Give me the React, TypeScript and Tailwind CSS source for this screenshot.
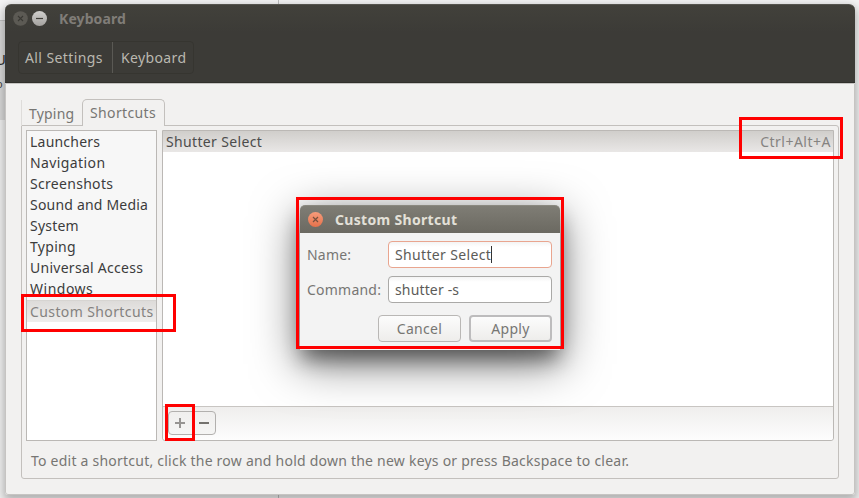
import type { ReactNode } from "react";

const categories = [
  { name: "Launchers", tracking: "tracking-[0.22px]" },
  { name: "Navigation", tracking: "tracking-[0.4px]" },
  { name: "Screenshots", tracking: "tracking-[0.3px]" },
  { name: "Sound and Media", tracking: "tracking-[0.2px]" },
  { name: "System", tracking: "tracking-[0.2px]" },
  { name: "Typing", tracking: "tracking-[0.3px]" },
  { name: "Universal Access", tracking: "tracking-[0.27px]" },
  { name: "Windows", tracking: "tracking-[0.5px]" },
];

function Highlight({ className }: { className: string }) {
  return <div className={`pointer-events-none absolute z-20 border-[3px] border-[#ff0000] ${className}`} />;
}

function Field({ label, children, focused }: { label: string; children: ReactNode; focused?: boolean }) {
  return (
    <div className="flex h-[27px] items-center">
      <span className="w-[81px] tracking-[0.22px] text-[#777673]">{label}</span>
      <div
        className={`flex h-[27px] w-[164px] items-center rounded-[4px] border bg-linear-to-b from-[#f4f4f4] via-white via-20% to-white pl-[6px] text-[#5c5b58] ${
          focused ? "border-[#e9a58f]" : "border-[#aaa9a7]"
        }`}
      >
        {children}
      </div>
    </div>
  );
}

function ShortcutDialog() {
  return (
    <div className="absolute left-[300px] top-[205px] z-10 h-[145px] w-[260px] rounded-t-[5px] bg-[#f3f3f3] shadow-[0_11px_20px_-2px_rgba(0,0,0,0.45),0_12px_46px_2px_rgba(0,0,0,0.5)]">
      <div className="flex h-[28px] items-center rounded-t-[5px] border-t border-[#8b8980] bg-linear-to-b from-[#7f7d75] to-[#6b6961] pl-[8px]">
        <svg width="15" height="15" viewBox="0 0 15 15">
          <defs>
            <linearGradient id="close" x1="0" y1="0" x2="0" y2="1">
              <stop offset="0" stopColor="#f79c7b" />
              <stop offset="1" stopColor="#e4714b" />
            </linearGradient>
          </defs>
          <circle cx="7.5" cy="7.5" r="7.5" fill="url(#close)" />
          <path d="M5 5l5 5M10 5l-5 5" stroke="#75503e" strokeWidth="1.2" />
        </svg>
        <span className="ml-[12px] text-[14px] font-bold tracking-[0.32px] text-[#e3e0d8]">Custom Shortcut</span>
      </div>
      <div className="flex flex-col gap-[8px] pl-[7px] pt-[8px]">
        <Field label="Name:" focused>
          <span className="tracking-[0.35px]">Shutter Select</span>
          <span className="h-[17px] w-px bg-[#333]" />
        </Field>
        <Field label="Command:">
          <span className="tracking-[0.15px]">shutter -s</span>
        </Field>
      </div>
      <div className="mr-[8px] mt-[12px] flex justify-end gap-[8px] tracking-[0.3px] text-[#777673]">
        <div className="flex h-[27px] w-[83px] items-center justify-center rounded-[4px] border border-[#b9b7b5] bg-linear-to-b from-[#fcfcfc] to-[#eeedeb]">
          Cancel
        </div>
        <div className="flex h-[27px] w-[83px] items-center justify-center rounded-[4px] border-2 border-[#bdbcbd] bg-linear-to-b from-[#fcfcfc] to-[#eeedeb]">
          Apply
        </div>
      </div>
    </div>
  );
}

function TitleBar() {
  return (
    <header className="h-[79px] shrink-0 rounded-t-[6px] border-b border-t border-b-[#31302c] border-t-[#55544e] bg-linear-to-b from-[#42413b] via-[#3c3b37] via-35% to-[#3c3b37]">
      <div className="flex h-[27px] items-center pl-[8px]">
        <svg width="34" height="15" viewBox="0 0 34 15">
          <defs>
            <linearGradient id="minimize" x1="0" y1="0" x2="0" y2="1">
              <stop offset="0" stopColor="#d1d0ce" />
              <stop offset="1" stopColor="#a3a19e" />
            </linearGradient>
          </defs>
          <circle cx="7.5" cy="7.5" r="7.3" fill="#5c5a54" />
          <path d="M5 5l5 5M10 5l-5 5" stroke="#3a3934" strokeWidth="1.1" />
          <circle cx="26.5" cy="7.5" r="7.5" fill="url(#minimize)" />
          <path d="M23 7.5h7" stroke="#403f3a" strokeWidth="1.2" />
        </svg>
        <span className="ml-[12px] text-[14px] font-bold tracking-[0.1px] text-[#807d78]">Keyboard</span>
      </div>
      <div className="ml-[13px] mt-[9px] flex h-[33px] w-[176px] rounded-[4px] border border-[#363530] text-[#bab8b0]">
        <div className="flex w-[94px] items-center border-r border-[#5a5954] pl-[6px] tracking-[0.4px]">All Settings</div>
        <div className="flex flex-1 items-center pl-[8px] tracking-[0.36px]">Keyboard</div>
      </div>
    </header>
  );
}

function Tabs() {
  return (
    <div className="relative z-[1] -mb-px flex h-[27px] items-end">
      <div className="flex h-[26px] w-[61px] items-center border-l border-[#dedcda] pl-[7px] pt-px tracking-[0.2px] text-[#777673]">
        Typing
      </div>
      <div className="flex h-[27px] w-[83px] items-center rounded-t-[5px] border border-b-0 border-[#c3c0bd] bg-[#f2f1f0] pl-[7px] tracking-[0.36px] text-[#777673]">
        Shortcuts
      </div>
    </div>
  );
}

function Sidebar() {
  return (
    <div className="flex w-[131px] flex-col border border-[#bbb8b5] bg-white">
      <div className="bg-[#f7f7f7]">
        {categories.map((item) => (
          <div key={item.name} className={`flex h-[21px] items-center whitespace-nowrap pl-[3px] text-[#3c3c3c] ${item.tracking}`}>
            {item.name}
          </div>
        ))}
      </div>
      <div className="h-[2px] border-b border-[#d6d4d1] bg-[#f7f7f7]" />
      <div className="flex h-[21px] items-center whitespace-nowrap bg-linear-to-b from-[#dddbd9] to-[#efeeed] pl-[3px] tracking-[0.39px] text-[#848280]">
        Custom Shortcuts
      </div>
    </div>
  );
}

function ShortcutList() {
  return (
    <div className="flex w-[672px] flex-col rounded-b-[3px] border border-[#bbb8b5] bg-white">
      <div className="flex h-[21px] items-center justify-between bg-linear-to-b from-[#d0cecb] to-[#e9e7e6] pl-[3px] pr-[2px]">
        <span className="tracking-[0.35px] text-[#4c4c4c]">Shutter Select</span>
        <span className="tracking-[0.5px] text-[#858381]">Ctrl+Alt+A</span>
      </div>
      <div className="flex-1" />
      <div className="flex h-[34px] items-center rounded-b-[3px] border-t border-[#c8c5c2] bg-linear-to-b from-[#efeeed] to-[#fdfdfd] pb-px pl-[5px]">
        <div className="flex h-[24px] w-[48px] items-center rounded-[4px] border border-[#b2b0ae] bg-linear-to-b from-[#f0efee] to-[#f5f5f4]">
          <svg width="46" height="22" viewBox="0 0 46 22" shapeRendering="crispEdges">
            <path d="M6 10h10v2H6zM10 6h2v10h-2z" fill="#969492" />
            <path d="M30 10h10v2H30z" fill="#74726e" />
          </svg>
        </div>
      </div>
    </div>
  );
}

export default function App() {
  return (
    <main className="relative h-[498px] w-[859px] overflow-hidden bg-[#f4f4f4] font-['Noto_Sans','Open_Sans',sans-serif] text-[14px] leading-[20px]">
      <div className="absolute left-0 top-[20px] h-[100px] w-[6px] border-t border-[#c4c4c4] bg-[#dcdcdc]" />
      <div className="absolute left-[278px] top-0 h-full w-px bg-[#bdbdbd]" />
      <span className="absolute left-[-5px] top-[49px] text-[15px] text-[#333]">U</span>
      <span className="absolute left-[-4px] top-[74px] text-[11px] text-[#444]">o</span>
      <section className="relative ml-[5px] mt-[4px] flex h-[491px] w-[850px] flex-col rounded-b-[3px] rounded-t-[6px] shadow-[0_4px_10px_2px_rgba(0,0,0,0.28)]">
        <TitleBar />
        <div className="flex flex-1 flex-col rounded-b-[3px] border border-[#c6c4c2] bg-[#f2f1f0] pl-[15px] pt-[15px]">
          <Tabs />
          <div className="h-[354px] w-[818px] rounded-b-[3px] rounded-tr-[3px] border border-[#c3c0bd] px-[4px] pt-[4px]">
            <div className="flex h-[311px] gap-[5px]">
              <Sidebar />
              <ShortcutList />
            </div>
            <p className="pl-[5px] pt-[10px] tracking-[0.23px] text-[#777673]">
              To edit a shortcut, click the row and hold down the new keys or press Backspace to clear.
            </p>
          </div>
        </div>
      </section>
      <ShortcutDialog />
      <Highlight className="left-[739px] top-[117px] h-[42px] w-[104px]" />
      <Highlight className="left-[21px] top-[294px] h-[38px] w-[155px]" />
      <Highlight className="left-[296px] top-[197px] h-[152px] w-[268px]" />
      <Highlight className="left-[165px] top-[404px] h-[37px] w-[30px]" />
    </main>
  );
}
